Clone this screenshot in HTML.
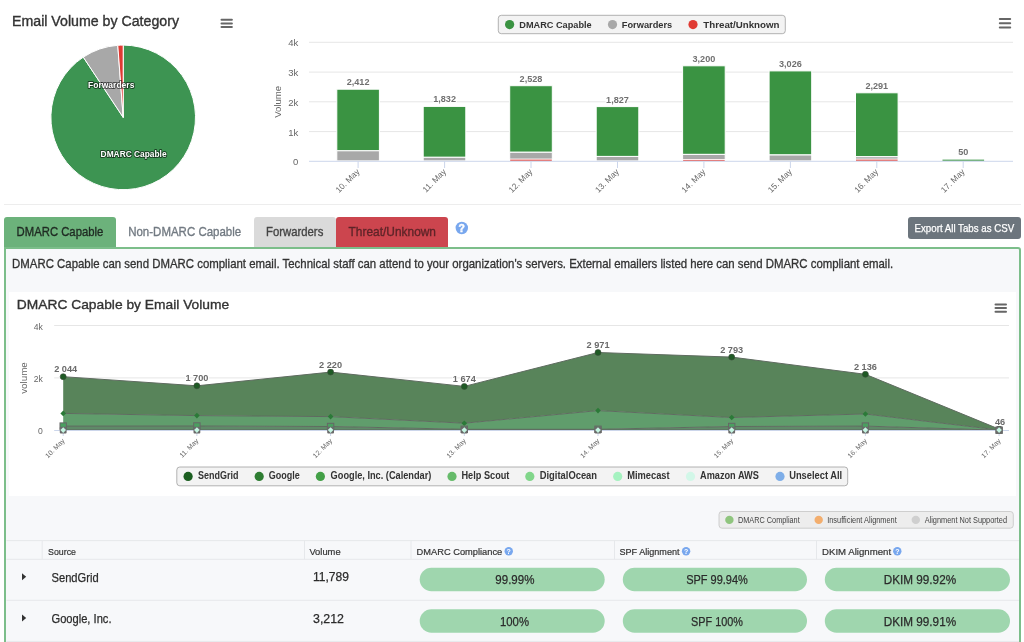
<!DOCTYPE html>
<html><head><meta charset="utf-8">
<style>
html,body{margin:0;padding:0;background:#fff;}
body{width:1024px;height:642px;overflow:hidden;position:relative;font-family:"Liberation Sans",sans-serif;}
.a{position:absolute;box-sizing:border-box;}
svg{position:absolute;left:0;top:0;overflow:visible;will-change:transform;}
svg text{font-family:"Liberation Sans",sans-serif;}
</style></head>
<body>
<!-- separator -->
<div class="a" style="left:4px;top:204px;width:1017px;height:1px;background:#ededed"></div>
<!-- tabs -->
<div class="a" style="left:4.4px;top:217px;width:111.3px;height:30px;background:#6cb27b;border-radius:3px 3px 0 0"></div>
<div class="a" style="left:253.7px;top:217px;width:82px;height:30px;background:#dadada;border-radius:3px 3px 0 0"></div>
<div class="a" style="left:335.7px;top:217px;width:112.3px;height:30px;background:#cc454e;border-radius:3px 3px 0 0"></div>
<!-- export button -->
<div class="a" style="left:907.8px;top:217px;width:112.8px;height:22px;background:#6c757d;border-radius:3px"></div>
<!-- panel -->
<div class="a" style="left:4.4px;top:246.7px;height:420px;background:#f7f8fa;border:2px solid #7cbe8a;border-radius:0 3px 0 0;width:1016.6px"></div>
<!-- chart box -->
<div class="a" style="left:8.7px;top:292.3px;width:1007.3px;height:204.1px;background:#fff"></div>

<svg width="1024" height="642" viewBox="0 0 1024 642">
<!-- ============ PIE ============ -->
<text x="12" y="25.5" font-size="13.8" fill="#333" stroke="#333" stroke-width="0.35" textLength="167" lengthAdjust="spacingAndGlyphs">Email Volume by Category</text>
<g fill="#666">
<rect x="220.5" y="18.7" width="12.4" height="2" rx="1"/>
<rect x="220.5" y="22.4" width="12.4" height="2" rx="1"/>
<rect x="220.5" y="26.1" width="12.4" height="2" rx="1"/>
</g>
<g stroke="#fff" stroke-width="1" stroke-linejoin="round">
<path d="M123.2,117.4 L123.2,45.1 A72.3,72.3 0 1 1 83.29,57.11 Z" fill="#3d9452"/>
<path d="M123.2,117.4 L83.29,57.11 A72.3,72.3 0 0 1 117.78,45.3 Z" fill="#a8a8a8"/>
<path d="M123.2,117.4 L117.78,45.3 A72.3,72.3 0 0 1 123.2,45.1 Z" fill="#e03a33"/>
</g>
<g font-weight="bold" font-size="9.6" fill="#fff" stroke="#000" stroke-width="2" stroke-opacity="0.55" paint-order="stroke" stroke-linejoin="round">
<text x="88" y="88" textLength="46.4" lengthAdjust="spacingAndGlyphs">Forwarders</text>
<text x="100.6" y="157" textLength="66" lengthAdjust="spacingAndGlyphs">DMARC Capable</text>
</g>

<!-- ============ BAR CHART ============ -->
<g stroke="#e6e6e6" stroke-width="1">
<line x1="309" y1="42.3" x2="1013" y2="42.3"/>
<line x1="309" y1="72.1" x2="1013" y2="72.1"/>
<line x1="309" y1="101.8" x2="1013" y2="101.8"/>
<line x1="309" y1="131.6" x2="1013" y2="131.6"/>
</g>
<g fill="#666" font-size="9.5" text-anchor="end">
<text x="298.2" y="46.3">4k</text>
<text x="298.2" y="76.1">3k</text>
<text x="298.2" y="105.8">2k</text>
<text x="298.2" y="135.6">1k</text>
<text x="298.2" y="165.2">0</text>
</g>
<text transform="translate(281,101.8) rotate(-90)" text-anchor="middle" font-size="9.6" fill="#666">Volume</text>
<g fill="#666">
<rect x="998.8" y="18" width="12.4" height="2" rx="1"/>
<rect x="998.8" y="22.2" width="12.4" height="2" rx="1"/>
<rect x="998.8" y="26.4" width="12.4" height="2" rx="1"/>
</g>
<!-- legend -->
<rect x="498.3" y="15.3" width="287" height="18.4" rx="3" fill="#f3f3f3" stroke="#a0a0a0" stroke-width="0.8"/>
<circle cx="509.6" cy="24.6" r="4.6" fill="#3a9342"/>
<circle cx="612.5" cy="24.6" r="4.6" fill="#a8a8a8"/>
<circle cx="693" cy="24.6" r="4.6" fill="#e03a33"/>
<g font-weight="bold" font-size="9.6" fill="#333">
<text x="519.3" y="28.2" textLength="72.4" lengthAdjust="spacingAndGlyphs">DMARC Capable</text>
<text x="621.8" y="28.2" textLength="50.4" lengthAdjust="spacingAndGlyphs">Forwarders</text>
<text x="703.3" y="28.2" textLength="76.2" lengthAdjust="spacingAndGlyphs">Threat/Unknown</text>
</g>
<!-- ============ TABS ============ -->
<g font-size="12.8" stroke-width="0.35">
<text x="16.6" y="236.3" fill="#1f2a22" stroke="#1f2a22" textLength="86.7" lengthAdjust="spacingAndGlyphs">DMARC Capable</text>
<text x="128.2" y="236.3" fill="#727a82" stroke="#727a82" textLength="113" lengthAdjust="spacingAndGlyphs">Non-DMARC Capable</text>
<text x="266.1" y="236.3" fill="#444" stroke="#444" textLength="57.2" lengthAdjust="spacingAndGlyphs">Forwarders</text>
<text x="348.6" y="236.3" fill="#5e2428" stroke="#5e2428" textLength="87.4" lengthAdjust="spacingAndGlyphs">Threat/Unknown</text>
</g>
<circle cx="461.8" cy="228" r="6.2" fill="#78a7ee"/>
<text x="461.8" y="231.8" text-anchor="middle" font-size="10.4" font-weight="bold" fill="#fff" stroke="#fff" stroke-width="0.5">?</text>
<text x="914.5" y="232" font-size="10.6" fill="#fff" stroke="#fff" stroke-width="0.25" textLength="99.8" lengthAdjust="spacingAndGlyphs">Export All Tabs as CSV</text>
<text x="12.1" y="267.6" font-size="12.1" fill="#333" stroke="#333" stroke-width="0.3" textLength="881" lengthAdjust="spacingAndGlyphs">DMARC Capable can send DMARC compliant email. Technical staff can attend to your organization's servers. External emailers listed here can send DMARC compliant email.</text>
<!-- chart 2 title -->
<text x="16.8" y="309.3" font-size="13.6" fill="#333" stroke="#333" stroke-width="0.35" textLength="212.4" lengthAdjust="spacingAndGlyphs">DMARC Capable by Email Volume</text>
<g fill="#666">
<rect x="994.5" y="303.6" width="12.5" height="2" rx="1"/>
<rect x="994.5" y="307.1" width="12.5" height="2" rx="1"/>
<rect x="994.5" y="310.7" width="12.5" height="2" rx="1"/>
</g>
<!-- chart 2 legend -->
<rect x="176.8" y="467" width="670.9" height="18.8" rx="3" fill="#f3f3f3" stroke="#a0a0a0" stroke-width="0.8"/>
<g>
<circle cx="188.1" cy="476.4" r="4.6" fill="#1b5e20"/>
<circle cx="259.2" cy="476.4" r="4.6" fill="#2e7d32"/>
<circle cx="320.4" cy="476.4" r="4.6" fill="#43a047"/>
<circle cx="452" cy="476.4" r="4.6" fill="#66bb6a"/>
<circle cx="529.8" cy="476.4" r="4.6" fill="#81d68a"/>
<circle cx="617.7" cy="476.4" r="4.6" fill="#a5f2c0"/>
<circle cx="690.5" cy="476.4" r="4.6" fill="#d2f7e8"/>
<circle cx="780" cy="476.4" r="4.6" fill="#7eaee8"/>
</g>
<g font-weight="bold" font-size="10" fill="#333">
<text x="198" y="479.3" textLength="40.4" lengthAdjust="spacingAndGlyphs">SendGrid</text>
<text x="268.8" y="479.3" textLength="31.1" lengthAdjust="spacingAndGlyphs">Google</text>
<text x="330.6" y="479.3" textLength="100.8" lengthAdjust="spacingAndGlyphs">Google, Inc. (Calendar)</text>
<text x="461.5" y="479.3" textLength="47.9" lengthAdjust="spacingAndGlyphs">Help Scout</text>
<text x="539.7" y="479.3" textLength="57.4" lengthAdjust="spacingAndGlyphs">DigitalOcean</text>
<text x="627.2" y="479.3" textLength="42.4" lengthAdjust="spacingAndGlyphs">Mimecast</text>
<text x="700" y="479.3" textLength="58.8" lengthAdjust="spacingAndGlyphs">Amazon AWS</text>
<text x="789.2" y="479.3" textLength="53" lengthAdjust="spacingAndGlyphs">Unselect All</text>
</g>
<!-- alignment legend -->
<rect x="719" y="511.5" width="294.3" height="16.7" rx="3" fill="#ededed" stroke="#c4c4c4" stroke-width="0.8"/>
<circle cx="729.4" cy="519.9" r="4.2" fill="#8fc57e"/>
<circle cx="818.7" cy="519.9" r="4.2" fill="#f3ae6e"/>
<circle cx="915.8" cy="519.9" r="4.2" fill="#cfcfcf"/>
<g font-size="8.2" fill="#444">
<text x="738" y="522.8" textLength="61.7" lengthAdjust="spacingAndGlyphs">DMARC Compliant</text>
<text x="827.2" y="522.8" textLength="69.6" lengthAdjust="spacingAndGlyphs">Insufficient Alignment</text>
<text x="924.7" y="522.8" textLength="82.3" lengthAdjust="spacingAndGlyphs">Alignment Not Supported</text>
</g>
<!-- table -->
<g stroke="#e6e8eb" stroke-width="1">
<line x1="6.4" y1="540.6" x2="1019" y2="540.6"/>
<line x1="6.4" y1="559.3" x2="1019" y2="559.3"/>
<line x1="6.4" y1="600.3" x2="1019" y2="600.3"/>
<line x1="6.4" y1="641.4" x2="1019" y2="641.4"/>
<line x1="42.2" y1="540.6" x2="42.2" y2="559.3"/>
<line x1="304.5" y1="540.6" x2="304.5" y2="559.3"/>
<line x1="411" y1="540.6" x2="411" y2="559.3"/>
<line x1="614.5" y1="540.6" x2="614.5" y2="559.3"/>
<line x1="816.5" y1="540.6" x2="816.5" y2="559.3"/>
</g>
<g font-size="9.8" fill="#333" stroke="#333" stroke-width="0.2">
<text x="48.1" y="555" textLength="27.9" lengthAdjust="spacingAndGlyphs">Source</text>
<text x="309.4" y="555" textLength="31.2" lengthAdjust="spacingAndGlyphs">Volume</text>
<text x="416.6" y="555" textLength="85.6" lengthAdjust="spacingAndGlyphs">DMARC Compliance</text>
<text x="619.5" y="555" textLength="60" lengthAdjust="spacingAndGlyphs">SPF Alignment</text>
<text x="822" y="555" textLength="69.1" lengthAdjust="spacingAndGlyphs">DKIM Alignment</text>
</g>
<g fill="#78a7ee">
<circle cx="508.75" cy="551.3" r="4.2"/>
<circle cx="686.1" cy="551.3" r="4.2"/>
<circle cx="897.3" cy="551.3" r="4.2"/>
</g>
<g font-size="7" font-weight="bold" fill="#fff" text-anchor="middle">
<text x="508.75" y="553.8">?</text>
<text x="686.1" y="553.8">?</text>
<text x="897.3" y="553.8">?</text>
</g>
<g fill="#333">
<path d="M22,573.2 L26.2,576.7 L22,580.2 Z"/>
<path d="M22,614.6 L26.2,618.1 L22,621.6 Z"/>
</g>
<g font-size="12.6" fill="#2b2b2b" stroke="#2b2b2b" stroke-width="0.25">
<text x="51.5" y="581.5" textLength="47.1" lengthAdjust="spacingAndGlyphs">SendGrid</text>
<text x="51.5" y="623" textLength="60" lengthAdjust="spacingAndGlyphs">Google, Inc.</text>
<text x="313" y="581.3" textLength="36" lengthAdjust="spacingAndGlyphs">11,789</text>
<text x="313" y="623" textLength="31" lengthAdjust="spacingAndGlyphs">3,212</text>
</g>
<g fill="#9fd6ae">
<rect x="419.7" y="567.8" width="185" height="23.5" rx="11.75"/>
<rect x="622.8" y="567.8" width="184.2" height="23.5" rx="11.75"/>
<rect x="824.8" y="567.8" width="185.2" height="23.5" rx="11.75"/>
<rect x="419.7" y="609.2" width="185" height="23.5" rx="11.75"/>
<rect x="622.8" y="609.2" width="184.2" height="23.5" rx="11.75"/>
<rect x="824.8" y="609.2" width="185.2" height="23.5" rx="11.75"/>
</g>
<g font-size="12.6" fill="#2b2b2b" stroke="#2b2b2b" stroke-width="0.25" text-anchor="middle">
<text x="514.9" y="584.2" textLength="39.1" lengthAdjust="spacingAndGlyphs">99.99%</text>
<text x="717" y="584.2" textLength="61.7" lengthAdjust="spacingAndGlyphs">SPF 99.94%</text>
<text x="919.9" y="584.2" textLength="72.5" lengthAdjust="spacingAndGlyphs">DKIM 99.92%</text>
<text x="514.5" y="625.6" textLength="29" lengthAdjust="spacingAndGlyphs">100%</text>
<text x="717" y="625.6" textLength="51.8" lengthAdjust="spacingAndGlyphs">SPF 100%</text>
<text x="919.9" y="625.6" textLength="72.5" lengthAdjust="spacingAndGlyphs">DKIM 99.91%</text>
</g>
<g id="bars">
<rect x="336.8" y="89.2" width="42.6" height="61.6" fill="#3a9342" stroke="#fff" stroke-width="1"/>
<rect x="336.8" y="150.8" width="42.6" height="10.1" fill="#a8a8a8" stroke="#fff" stroke-width="1"/>
<rect x="423.2" y="106.4" width="42.6" height="50.9" fill="#3a9342" stroke="#fff" stroke-width="1"/>
<rect x="423.2" y="157.3" width="42.6" height="3.6" fill="#a8a8a8" stroke="#fff" stroke-width="1"/>
<rect x="509.7" y="85.7" width="42.6" height="66.5" fill="#3a9342" stroke="#fff" stroke-width="1"/>
<rect x="509.7" y="152.3" width="42.6" height="6.8" fill="#a8a8a8" stroke="#fff" stroke-width="1"/>
<rect x="510.2" y="159.6" width="41.6" height="1.3" fill="#e65a55"/>
<rect x="596.2" y="106.6" width="42.6" height="49.9" fill="#3a9342" stroke="#fff" stroke-width="1"/>
<rect x="596.2" y="156.4" width="42.6" height="4.5" fill="#a8a8a8" stroke="#fff" stroke-width="1"/>
<rect x="682.6" y="65.8" width="42.6" height="88.6" fill="#3a9342" stroke="#fff" stroke-width="1"/>
<rect x="682.6" y="154.4" width="42.6" height="5.1" fill="#a8a8a8" stroke="#fff" stroke-width="1"/>
<rect x="683.1" y="159.9" width="41.6" height="1.0" fill="#e65a55"/>
<rect x="769.1" y="70.9" width="42.6" height="84.0" fill="#3a9342" stroke="#fff" stroke-width="1"/>
<rect x="769.1" y="155.0" width="42.6" height="5.9" fill="#a8a8a8" stroke="#fff" stroke-width="1"/>
<rect x="855.5" y="92.8" width="42.6" height="63.9" fill="#3a9342" stroke="#fff" stroke-width="1"/>
<rect x="855.5" y="156.7" width="42.6" height="2.4" fill="#a8a8a8" stroke="#fff" stroke-width="1"/>
<rect x="856.0" y="159.6" width="41.6" height="1.3" fill="#e65a55"/>
<rect x="942.5" y="159.6" width="41.6" height="1.3" fill="#54a25c"/>
<line x1="309" y1="161.3" x2="1013" y2="161.3" stroke="#ccd6eb" stroke-width="1"/>
<line x1="358.1" y1="161.3" x2="358.1" y2="168" stroke="#ccd6eb" stroke-width="1"/>
<line x1="444.6" y1="161.3" x2="444.6" y2="168" stroke="#ccd6eb" stroke-width="1"/>
<line x1="531.0" y1="161.3" x2="531.0" y2="168" stroke="#ccd6eb" stroke-width="1"/>
<line x1="617.5" y1="161.3" x2="617.5" y2="168" stroke="#ccd6eb" stroke-width="1"/>
<line x1="703.9" y1="161.3" x2="703.9" y2="168" stroke="#ccd6eb" stroke-width="1"/>
<line x1="790.4" y1="161.3" x2="790.4" y2="168" stroke="#ccd6eb" stroke-width="1"/>
<line x1="876.8" y1="161.3" x2="876.8" y2="168" stroke="#ccd6eb" stroke-width="1"/>
<line x1="963.2" y1="161.3" x2="963.2" y2="168" stroke="#ccd6eb" stroke-width="1"/>
<g font-weight="bold" font-size="9.1" fill="#707070" stroke="#fff" stroke-width="2" paint-order="stroke"><text x="358.1" y="85.1" text-anchor="middle">2,412</text>
<text x="444.6" y="102.3" text-anchor="middle">1,832</text>
<text x="531.0" y="81.6" text-anchor="middle">2,528</text>
<text x="617.5" y="102.5" text-anchor="middle">1,827</text>
<text x="703.9" y="61.7" text-anchor="middle">3,200</text>
<text x="790.4" y="66.8" text-anchor="middle">3,026</text>
<text x="876.8" y="88.7" text-anchor="middle">2,291</text>
<text x="963.2" y="155.3" text-anchor="middle">50</text></g>
<g font-size="8.4" fill="#666"><text transform="translate(360.1,172.3) rotate(-45)" text-anchor="end">10. May</text>
<text transform="translate(446.6,172.3) rotate(-45)" text-anchor="end">11. May</text>
<text transform="translate(533.0,172.3) rotate(-45)" text-anchor="end">12. May</text>
<text transform="translate(619.5,172.3) rotate(-45)" text-anchor="end">13. May</text>
<text transform="translate(705.9,172.3) rotate(-45)" text-anchor="end">14. May</text>
<text transform="translate(792.4,172.3) rotate(-45)" text-anchor="end">15. May</text>
<text transform="translate(878.8,172.3) rotate(-45)" text-anchor="end">16. May</text>
<text transform="translate(965.2,172.3) rotate(-45)" text-anchor="end">17. May</text></g>
</g><!--/bars-->
<g id="area">
<g stroke="#e6e6e6" stroke-width="1"><line x1="54.2" y1="325.5" x2="1009" y2="325.5"/><line x1="54.2" y1="377.9" x2="1009" y2="377.9"/></g>
<g fill="#666" font-size="8.6" text-anchor="end"><text x="42.8" y="330">4k</text><text x="42.9" y="382">2k</text><text x="42.8" y="434.3">0</text></g>
<text transform="translate(26.5,378) rotate(-90)" text-anchor="middle" font-size="9.8" fill="#666">volume</text>
<polygon points="63.2,376.7 196.9,385.8 330.6,372.1 464.3,386.4 598.0,352.5 731.7,357.1 865.4,374.3 999.1,429.1 999.1,430.0 865.4,414.0 731.7,417.5 598.0,410.6 464.3,423.2 330.6,416.6 196.9,415.6 63.2,413.4" fill="#58845a"/>
<polygon points="63.2,413.4 196.9,415.6 330.6,416.6 464.3,423.2 598.0,410.6 731.7,417.5 865.4,414.0 999.1,430.0 999.1,430.2 865.4,426.1 731.7,426.5 598.0,429.3 464.3,429.3 330.6,426.5 196.9,426.0 63.2,426.1" fill="#609d6c"/>
<polygon points="63.2,426.1 196.9,426.0 330.6,426.5 464.3,429.3 598.0,429.3 731.7,426.5 865.4,426.1 999.1,430.2 999.1,430.3 865.4,429.9 731.7,429.9 598.0,429.9 464.3,429.9 330.6,429.9 196.9,429.9 63.2,429.9" fill="#5f8a68"/>
<polygon points="63.2,429.9 196.9,429.9 330.6,429.9 464.3,429.9 598.0,429.9 731.7,429.9 865.4,429.9 999.1,430.3 999.1,430.3 865.4,430.3 731.7,430.3 598.0,430.3 464.3,430.3 330.6,430.3 196.9,430.3 63.2,430.3" fill="#6b8f78"/>
<polyline points="63.2,376.7 196.9,385.8 330.6,372.1 464.3,386.4 598.0,352.5 731.7,357.1 865.4,374.3 999.1,429.1" fill="none" stroke="#5f6b60" stroke-width="1"/>
<polyline points="63.2,413.4 196.9,415.6 330.6,416.6 464.3,423.2 598.0,410.6 731.7,417.5 865.4,414.0 999.1,430.0" fill="none" stroke="#5f6b60" stroke-width="1"/>
<polyline points="63.2,426.1 196.9,426.0 330.6,426.5 464.3,429.3 598.0,429.3 731.7,426.5 865.4,426.1 999.1,430.2" fill="none" stroke="#5f6b60" stroke-width="1"/>
<polyline points="63.2,429.9 196.9,429.9 330.6,429.9 464.3,429.9 598.0,429.9 731.7,429.9 865.4,429.9 999.1,430.3" fill="none" stroke="#5f6b60" stroke-width="1"/>
<line x1="54.2" y1="430.5" x2="1009" y2="430.5" stroke="#ccd6eb" stroke-width="1"/>
<g stroke="#ccd6eb" stroke-width="1"><line x1="63.2" y1="430.5" x2="63.2" y2="436"/><line x1="196.9" y1="430.5" x2="196.9" y2="436"/><line x1="330.6" y1="430.5" x2="330.6" y2="436"/><line x1="464.3" y1="430.5" x2="464.3" y2="436"/><line x1="598.0" y1="430.5" x2="598.0" y2="436"/><line x1="731.7" y1="430.5" x2="731.7" y2="436"/><line x1="865.4" y1="430.5" x2="865.4" y2="436"/><line x1="999.1" y1="430.5" x2="999.1" y2="436"/></g>
<g fill="#1e5a24"><circle cx="63.2" cy="376.7" r="3.0" stroke="#3a4a3a" stroke-width="0.6"/><circle cx="196.9" cy="385.8" r="3.0" stroke="#3a4a3a" stroke-width="0.6"/><circle cx="330.6" cy="372.1" r="3.0" stroke="#3a4a3a" stroke-width="0.6"/><circle cx="464.3" cy="386.4" r="3.0" stroke="#3a4a3a" stroke-width="0.6"/><circle cx="598.0" cy="352.5" r="3.0" stroke="#3a4a3a" stroke-width="0.6"/><circle cx="731.7" cy="357.1" r="3.0" stroke="#3a4a3a" stroke-width="0.6"/><circle cx="865.4" cy="374.3" r="3.0" stroke="#3a4a3a" stroke-width="0.6"/><circle cx="999.1" cy="429.1" r="3.0" stroke="#3a4a3a" stroke-width="0.6"/></g>
<g fill="#2b7a38"><path d="M63.2,410.6 l2.8,2.8 l-2.8,2.8 l-2.8,-2.8 z"/><path d="M196.9,412.8 l2.8,2.8 l-2.8,2.8 l-2.8,-2.8 z"/><path d="M330.6,413.8 l2.8,2.8 l-2.8,2.8 l-2.8,-2.8 z"/><path d="M464.3,420.4 l2.8,2.8 l-2.8,2.8 l-2.8,-2.8 z"/><path d="M598.0,407.8 l2.8,2.8 l-2.8,2.8 l-2.8,-2.8 z"/><path d="M731.7,414.7 l2.8,2.8 l-2.8,2.8 l-2.8,-2.8 z"/><path d="M865.4,411.2 l2.8,2.8 l-2.8,2.8 l-2.8,-2.8 z"/><path d="M999.1,427.2 l2.8,2.8 l-2.8,2.8 l-2.8,-2.8 z"/></g>
<g fill="#4aa060" stroke="#666" stroke-width="1"><rect x="60.0" y="422.9" width="6.4" height="6.4"/><rect x="193.7" y="422.8" width="6.4" height="6.4"/><rect x="327.4" y="423.3" width="6.4" height="6.4"/><rect x="461.1" y="426.1" width="6.4" height="6.4"/><rect x="594.8" y="426.1" width="6.4" height="6.4"/><rect x="728.5" y="423.3" width="6.4" height="6.4"/><rect x="862.2" y="422.9" width="6.4" height="6.4"/><rect x="995.9" y="427.0" width="6.4" height="6.4"/></g>
<g fill="#6a6a6a"><rect x="59.8" y="426.7" width="6.8" height="6.8" rx="1"/><rect x="193.5" y="426.7" width="6.8" height="6.8" rx="1"/><rect x="327.2" y="426.7" width="6.8" height="6.8" rx="1"/><rect x="460.9" y="426.7" width="6.8" height="6.8" rx="1"/><rect x="594.6" y="426.7" width="6.8" height="6.8" rx="1"/><rect x="728.3" y="426.7" width="6.8" height="6.8" rx="1"/><rect x="862.0" y="426.7" width="6.8" height="6.8" rx="1"/><rect x="995.7" y="426.7" width="6.8" height="6.8" rx="1"/></g>
<g fill="#c4f5e2"><path d="M63.2,427.3 l2.8,2.8 l-2.8,2.8 l-2.8,-2.8 z"/><path d="M196.9,427.3 l2.8,2.8 l-2.8,2.8 l-2.8,-2.8 z"/><path d="M330.6,427.3 l2.8,2.8 l-2.8,2.8 l-2.8,-2.8 z"/><path d="M464.3,427.3 l2.8,2.8 l-2.8,2.8 l-2.8,-2.8 z"/><path d="M598.0,427.3 l2.8,2.8 l-2.8,2.8 l-2.8,-2.8 z"/><path d="M731.7,427.3 l2.8,2.8 l-2.8,2.8 l-2.8,-2.8 z"/><path d="M865.4,427.3 l2.8,2.8 l-2.8,2.8 l-2.8,-2.8 z"/><path d="M999.1,427.3 l2.8,2.8 l-2.8,2.8 l-2.8,-2.8 z"/></g>
<g font-weight="bold" font-size="9.2" fill="#6a6a6a" stroke="#fff" stroke-width="2" paint-order="stroke"><text x="65.7" y="372.2" text-anchor="middle">2 044</text><text x="196.9" y="381.3" text-anchor="middle">1 700</text><text x="330.6" y="367.6" text-anchor="middle">2 220</text><text x="464.3" y="381.9" text-anchor="middle">1 674</text><text x="598.0" y="348.0" text-anchor="middle">2 971</text><text x="731.7" y="352.6" text-anchor="middle">2 793</text><text x="865.4" y="369.8" text-anchor="middle">2 136</text><text x="1000.0" y="424.6" text-anchor="middle">46</text></g>
<g font-size="6.8" fill="#666"><text transform="translate(65.2,441.3) rotate(-45)" text-anchor="end">10. May</text><text transform="translate(198.9,441.3) rotate(-45)" text-anchor="end">11. May</text><text transform="translate(332.6,441.3) rotate(-45)" text-anchor="end">12. May</text><text transform="translate(466.3,441.3) rotate(-45)" text-anchor="end">13. May</text><text transform="translate(600.0,441.3) rotate(-45)" text-anchor="end">14. May</text><text transform="translate(733.7,441.3) rotate(-45)" text-anchor="end">15. May</text><text transform="translate(867.4,441.3) rotate(-45)" text-anchor="end">16. May</text><text transform="translate(1001.1,441.3) rotate(-45)" text-anchor="end">17. May</text></g>
</g><!--/area-->
</svg>
</body></html>
